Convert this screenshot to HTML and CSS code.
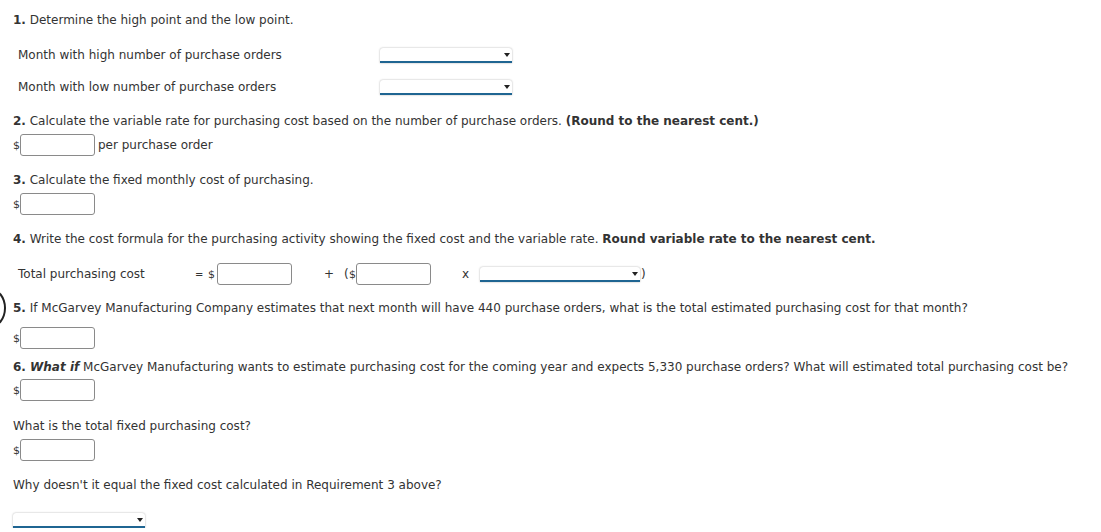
FILE: index.html
```html
<!DOCTYPE html>
<html>
<head>
<meta charset="utf-8">
<link rel="stylesheet" href="styles.css">
</head>
<body>
<div class="ring"></div>
<div class="page">
  <p class="line q1"><b>1.</b> Determine the high point and the low point.</p>
  <div class="row r-high"><span class="lbl">Month with high number of purchase orders</span><span class="dd dd-m"></span></div>
  <div class="row r-low"><span class="lbl">Month with low number of purchase orders</span><span class="dd dd-m"></span></div>

  <p class="line q2"><b>2.</b> Calculate the variable rate for purchasing cost based on the number of purchase orders. <b>(Round to the nearest cent.)</b></p>
  <div class="inrow gap5"><span class="cur">$</span><span class="box"></span><span class="after">per purchase order</span></div>

  <p class="line q3"><b>3.</b> Calculate the fixed monthly cost of purchasing.</p>
  <div class="inrow gap5"><span class="cur">$</span><span class="box"></span></div>

  <p class="line q4"><b>4.</b> Write the cost formula for the purchasing activity showing the fixed cost and the variable rate. <b>Round variable rate to the nearest cent.</b></p>
  <div class="formula">
    <span class="flabel">Total purchasing cost</span>
    <span class="eq">=</span>
    <span class="cur cur-f">$</span><span class="box"></span>
    <span class="plus">+</span>
    <span class="paren">(</span><span class="cur">$</span><span class="box"></span>
    <span class="times">x</span>
    <span class="dd dd-f"></span><span class="close">)</span>
  </div>

  <p class="line q5"><b>5.</b> If McGarvey Manufacturing Company estimates that next month will have 440 purchase orders, what is the total estimated purchasing cost for that month?</p>
  <div class="inrow gap11"><span class="cur">$</span><span class="box"></span></div>

  <p class="line q6"><b>6. <i>What if</i></b> McGarvey Manufacturing wants to estimate purchasing cost for the coming year and expects 5,330 purchase orders? What will estimated total purchasing cost be?</p>
  <div class="inrow gap4"><span class="cur">$</span><span class="box"></span></div>

  <p class="line q7">What is the total fixed purchasing cost?</p>
  <div class="inrow gap5"><span class="cur">$</span><span class="box"></span></div>

  <p class="line q8">Why doesn't it equal the fixed cost calculated in Requirement 3 above?</p>
  <div class="last"><span class="dd dd-l"></span></div>
</div>
</body>
</html>
```
FILE: styles.css
```css
html, body {
  margin: 0;
  padding: 0;
  background: #fff;
}
body {
  font-family: "DejaVu Sans", Verdana, sans-serif;
  font-size: 12px;
  color: #333;
  position: relative;
  overflow: hidden;
}
.page {
  padding: 12px 0 0 13px;
}
.line {
  margin: 0;
  line-height: 16px;
  height: 16px;
  white-space: nowrap;
}
.line b { font-weight: bold; }
.q2 { margin-top: 18px; }
.q3, .q4, .q8 { margin-top: 16px; }
.q5 { margin-top: 15px; }
.q6 { margin-top: 10px; }
.q7 { margin-top: 17px; }

.row {
  display: flex;
  align-items: center;
  height: 16px;
  padding-left: 5px;
}
.r-high { margin-top: 19px; }
.r-low { margin-top: 16px; }
.lbl { width: 362px; }

.dd {
  display: inline-block;
  position: relative;
  height: 13px;
  background: #fff;
  border-radius: 3px 3px 0 0;
  border-bottom: 2px solid #1f6592;
  box-shadow: 0 0 2px rgba(0,0,0,0.35);
}
.dd::after {
  content: "";
  position: absolute;
  right: 2px;
  top: 5px;
  border-left: 3px solid transparent;
  border-right: 3px solid transparent;
  border-top: 4px solid #222;
}
.dd-m { width: 132px; }
.dd-f { width: 160px; }
.dd-l { width: 132px; }

.inrow {
  display: flex;
  align-items: center;
  height: 22px;
}
.gap5 { margin-top: 5px; }
.gap4 { margin-top: 4px; }
.gap11 { margin-top: 11px; }
.cur {
  font-size: 11px;
  width: 7px;
  flex: none;
}
.box {
  display: inline-block;
  box-sizing: border-box;
  flex: none;
  width: 75px;
  height: 22px;
  border: 1px solid #8a8a8a;
  border-radius: 3px;
  background: #fff;
}
.after { margin-left: 3px; }

.formula {
  display: flex;
  align-items: center;
  height: 22px;
  margin-top: 16px;
  padding-left: 5px;
}
.formula > span { flex: none; }
.flabel { width: 177px; }
.eq { width: 13px; font-size: 10px; }
.cur-f { width: 9px; }
.plus { margin-left: 32px; width: 20px; }
.paren { width: 5px; }
.times { margin-left: 31px; width: 18px; }
.close { margin-left: 1px; }

.last {
  margin-top: 20px;
  height: 15px;
}

.ring {
  position: absolute;
  left: -26px;
  top: 288px;
  width: 28px;
  height: 36px;
  border: 2px solid #222;
  border-radius: 50%;
}
```
